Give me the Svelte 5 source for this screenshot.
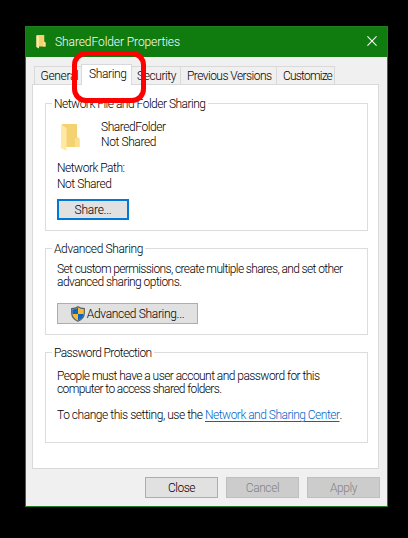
<script>
  const tabs = [
    { label: 'General', left: 5.5, width: 47, fit: 38 },
    { label: 'Sharing', left: 7, width: 51, fit: 37.5, active: true },
    { label: 'Security', left: 5, width: 48, fit: 39 },
    { label: 'Previous Versions', left: 6, width: 96, fit: 84.5 },
    { label: 'Customize', left: 6, width: 59, fit: 49 }
  ];

  // Spreads the letters of a label evenly over a given width.
  function fit(node, width) {
    const natural = node.getBoundingClientRect().width;
    node.style.letterSpacing = `${(width - natural) / node.textContent.length}px`;
  }
</script>

{#snippet folder()}
  <svg class="folder" viewBox="0 0 19 28">
    <path d="M1 0h15v13l2.500 1.500V23H5z" fill="#f5d271" />
    <path d="M14 14h2.500l2 1.500V23H14z" fill="#fbdf8a" />
    <path d="M0 .5L5.500 4v23L0 24z" fill="#ffe9a2" />
  </svg>
{/snippet}

<main>
  <section class="window">
    <header>
      <span class="small">{@render folder()}</span>
      <h1><span use:fit={125}>SharedFolder Properties</span></h1>
      <svg class="x" viewBox="0 0 11 11"><path d="M.5 .5l10 10M10.500 .5l-10 10" stroke="#fff" stroke-width="1.200" /></svg>
    </header>

    <nav>
      {#each tabs as tab}
        <div class="tab" class:active={tab.active} style="width:{tab.width}px;padding-left:{tab.left}px">
          <span use:fit={tab.fit}>{tab.label}</span>
        </div>
      {/each}
      <div class="ring"></div>
    </nav>

    <div class="panel">
      <section class="group first">
        <h2><span use:fit={151.5}>Network File and Folder Sharing</span></h2>
        <div class="item">
          <span class="large">{@render folder()}</span>
          <div>
            <p><span use:fit={64.5}>SharedFolder</span></p>
            <p><span use:fit={55}>Not Shared</span></p>
          </div>
        </div>
        <p class="path"><span use:fit={67.5}>Network Path:</span></p>
        <p class="value"><span use:fit={54.5}>Not Shared</span></p>
        <button class="share"><span use:fit={37}>Share...</span></button>
      </section>

      <section class="group second">
        <h2><span use:fit={89}>Advanced Sharing</span></h2>
        <div class="copy">
          <p><span use:fit={285.5}>Set custom permissions, create multiple shares, and set other</span></p>
          <p><span use:fit={124.5}>advanced sharing options.</span></p>
        </div>
        <button class="advanced">
          <svg class="shield" viewBox="0 0 14 16">
            <defs><clipPath id="shield"><path d="M7 1.500C5 3 3 3.200 1.300 3.200V7c0 4 2.500 6 5.700 7.500 3.200-1.500 5.700-3.500 5.700-7.500V3.200C11 3.200 9 3 7 1.500z" /></clipPath></defs>
            <g clip-path="url(#shield)">
              <path d="M0 0h7v8H0zM7 8h7v8H7z" fill="#0c66c5" />
              <path d="M7 0h7v8H7zM0 8h7v8H0z" fill="#fdb92c" />
            </g>
            <path d="M7 .8C5 2.500 2.800 2.700.7 2.700V7c0 4.300 2.800 6.700 6.300 8.300 3.500-1.600 6.300-4 6.300-8.300V2.700C11.200 2.700 9 2.500 7 .8z" fill="none" stroke="#555f66" stroke-width="1.200" />
          </svg>
          <span use:fit={97.5}>Advanced Sharing...</span>
        </button>
      </section>

      <section class="group third">
        <h2><span use:fit={97.5}>Password Protection</span></h2>
        <div class="copy">
          <p><span use:fit={262.5}>People must have a user account and password for this</span></p>
          <p><span use:fit={164.5}>computer to access shared folders.</span></p>
        </div>
        <p class="setting"><span class="lead" use:fit={145.5}>To change this setting, use the</span><a href="#center" use:fit={134.5}>Network and Sharing Center</a><span>.</span></p>
      </section>
    </div>

    <footer>
      <button><span use:fit={27}>Close</span></button>
      <button disabled><span use:fit={33.5}>Cancel</span></button>
      <button disabled><span use:fit={27}>Apply</span></button>
    </footer>
  </section>
</main>

<style>
  :global(body) { background: #000; }
  main {
    box-sizing: border-box;
    width: 408px;
    height: 538px;
    padding: 26px 0 0 25px;
    background: #000;
    font: 300 12px/16px Roboto, "Liberation Sans", sans-serif;
    color: #000;
  }
  main * { box-sizing: border-box; }
  h1, h2, p { margin: 0; font: inherit; white-space: nowrap; }
  span, a { display: inline-block; white-space: nowrap; }
  p > span, p > a { vertical-align: top; }
  svg { display: block; flex: none; }
  .window {
    width: 363px;
    height: 481px;
    border: 1px solid #1f7e1f;
    background: #f0f0f0;
  }
  header {
    display: flex;
    align-items: center;
    height: 30px;
    padding: 0 10px 0 10px;
    background: #107c10;
    color: #fff;
  }
  h1 { flex: 1; margin-left: 9px; }
  .small { width: 10px; height: 14px; }
  .folder { width: 100%; height: 100%; }
  .x { width: 10px; height: 10px; margin-bottom: 2px; }
  nav {
    position: relative;
    display: flex;
    align-items: flex-end;
    height: 27px;
    padding-left: 8px;
  }
  .tab {
    height: 18px;
    border: 1px solid #d9d9d9;
    border-width: 1px 0 0 1px;
    line-height: 19px;
  }
  .tab:nth-child(5) { border-right-width: 1px; }
  .tab.active {
    z-index: 1;
    height: 21px;
    margin-bottom: -1px;
    border-right-width: 1px;
    background: #fff;
  }
  .tab.active + .tab { border-left: 0; }
  .ring {
    position: absolute;
    z-index: 2;
    left: 46px;
    top: -6px;
    width: 74px;
    height: 52px;
    border: 5px solid #f00;
    border-radius: 14px;
  }
  .panel {
    width: 347px;
    height: 385px;
    margin-left: 6px;
    padding: 18px 11px 0 12px;
    border: 1px solid #d9d9d9;
    background: #fff;
  }
  .group {
    width: 323px;
    border: 1px solid #dcdcdc;
    padding-left: 11px;
  }
  .first { height: 128px; }
  .second { height: 87px; margin-top: 17px; }
  .third { height: 91px; margin-top: 17px; }
  h2 {
    width: fit-content;
    height: 16px;
    margin: -8px 0 0 -5px;
    padding: 0 2px 0 2px;
    background: #fff;
  }
  .item { display: flex; padding: 8px 0 0 4px; line-height: 15px; }
  .item > div { margin-left: 21px; }
  .large { width: 19px; height: 28px; margin-top: 4px; }
  .path { margin-top: 8px; }
  button {
    display: flex;
    align-items: center;
    justify-content: center;
    height: 21px;
    padding: 0;
    border: 1px solid #adadad;
    background: #e1e1e1;
    font: inherit;
    color: #000;
  }
  .share { width: 72px; margin-top: 7px; border: 2px solid #0078d7; }
  .copy { margin-top: 6px; line-height: 13px; }
  .advanced { width: 141px; margin-top: 14px; }
  .shield { width: 14px; height: 16px; margin-right: 2px; }
  .third .copy { margin-top: 9px; }
  .setting { margin-top: 11px; }
  .lead { margin-right: 2.5px; }
  a { color: #0066cc; text-underline-offset: 2px; }
  footer { display: flex; gap: 8px; margin: 8px 0 0 119px; }
  footer button { width: 73px; }
  button:disabled { background: #ccc; border-color: #bfbfbf; color: #838383; }
</style>
